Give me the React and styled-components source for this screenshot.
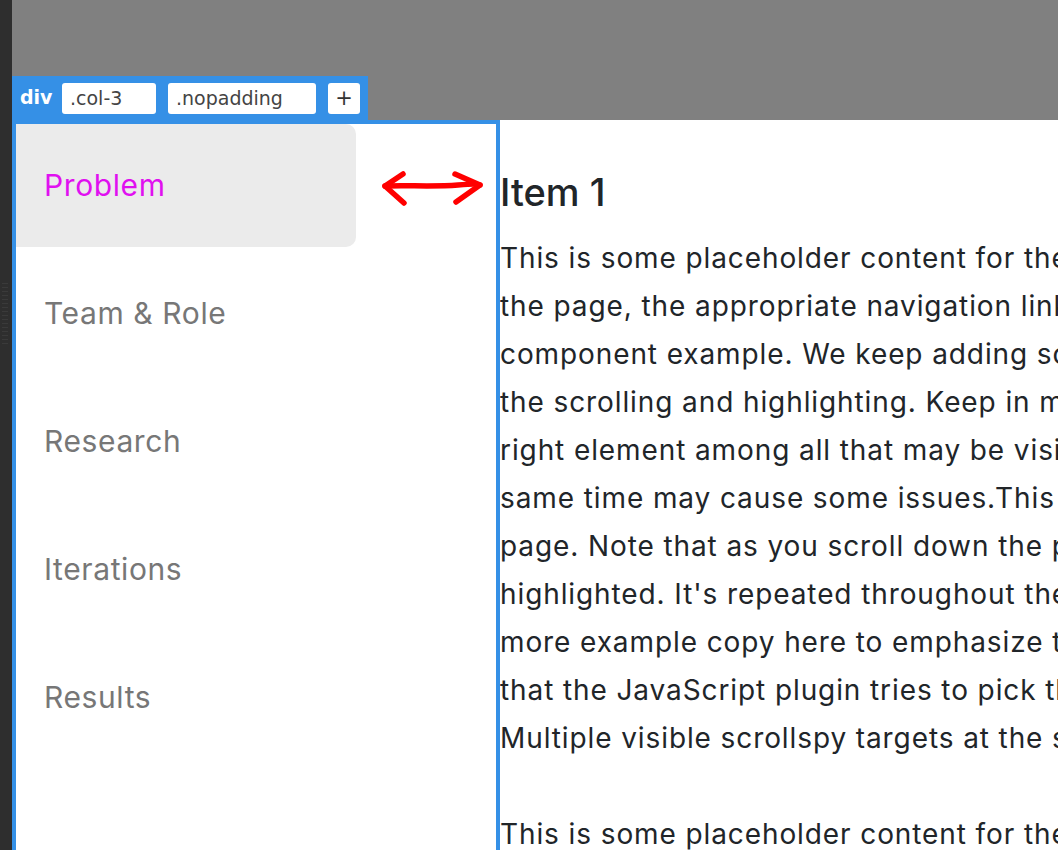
import styled, { createGlobalStyle } from "styled-components";

const GlobalStyle = createGlobalStyle`
    html, body {
        margin: 0;
        padding: 0;
        background: #ffffff;
    }
    body {
        font-family: 'Inter', 'Liberation Sans', sans-serif;
        overflow: hidden;
    }
`;

const navItems = ["Problem", "Team & Role", "Research", "Iterations", "Results"];

const firstPara = [
    "This is some placeholder content for the scrollspy page. Note that as you scroll down",
    "the page, the appropriate navigation link is highlighted. It's repeated throughout the",
    "component example. We keep adding some more example copy here to emphasize",
    "the scrolling and highlighting. Keep in mind that the JavaScript plugin tries to pick the",
    "right element among all that may be visible. Multiple visible scrollspy targets at the",
    "same time may cause some issues.This is some placeholder content for the scrollspy",
    "page. Note that as you scroll down the page, the appropriate navigation link is",
    "highlighted. It's repeated throughout the component example. We keep adding some",
    "more example copy here to emphasize the scrolling and highlighting. Keep in mind",
    "that the JavaScript plugin tries to pick the right element among all that may be visible.",
    "Multiple visible scrollspy targets at the same time may cause some issues.",
];

const secondPara = [
    "This is some placeholder content for the scrollspy page. Note that as you scroll down",
];

export default function App() {
    return (
        <>
            <GlobalStyle />
            <Page>
                <Strip>
                    <Grip />
                </Strip>
                <Main>
                    <TopArea>
                        <TagBar>
                            <TagName>div</TagName>
                            <Pill width={94}>.col-3</Pill>
                            <Pill width={148}>.nopadding</Pill>
                            <AddPill>+</AddPill>
                        </TagBar>
                    </TopArea>
                    <Body>
                        <Sidebar>
                            {navItems.map((item, i) => (
                                <NavLink key={item} active={i === 0}>{item}</NavLink>
                            ))}
                            {/* hand-drawn annotation arrow */}
                            <Arrow width="112" height="44" viewBox="0 0 112 44">
                                <path
                                    d="M7 19 C 28 18, 55 20, 80 18 S 98 18, 102 18"
                                    fill="none" stroke="#ff0000" strokeWidth="5.5" strokeLinecap="round"
                                />
                                <path
                                    d="M25 7 L 7 19 L 26 36"
                                    fill="none" stroke="#ff0000" strokeWidth="5.5" strokeLinecap="round" strokeLinejoin="round"
                                />
                                <path
                                    d="M77 7 L 102 18 L 78 35"
                                    fill="none" stroke="#ff0000" strokeWidth="5.5" strokeLinecap="round" strokeLinejoin="round"
                                />
                            </Arrow>
                        </Sidebar>
                        <Content>
                            <Heading>Item 1</Heading>
                            <Paragraph>
                                {firstPara.map((line, i) => <Line key={i}>{line}</Line>)}
                            </Paragraph>
                            <Paragraph>
                                {secondPara.map((line, i) => <Line key={i}>{line}</Line>)}
                            </Paragraph>
                        </Content>
                    </Body>
                </Main>
            </Page>
        </>
    );
}

const Page = styled.div`
    display: flex;
    width: 1058px;
    height: 850px;
    overflow: hidden;
`;

const Strip = styled.div`
    width: 12px;
    flex-shrink: 0;
    background: #2e2e2e;
    display: flex;
    flex-direction: column;
    padding-top: 283px;
    box-sizing: border-box;
`;

const Grip = styled.div`
    margin-left: 2px;
    width: 6px;
    height: 64px;
    background: repeating-linear-gradient(
        to bottom,
        #3a3a3a 0px,
        #3a3a3a 1px,
        transparent 1px,
        transparent 4px
    );
`;

const Main = styled.div`
    flex: 1;
    display: flex;
    flex-direction: column;
    min-width: 0;
`;

const TopArea = styled.div`
    height: 120px;
    background: #808080;
    display: flex;
    align-items: flex-end;
    flex-shrink: 0;
`;

const TagBar = styled.div`
    height: 44px;
    width: 356px;
    background: #3590e6;
    display: flex;
    align-items: center;
    gap: 12px;
    padding-left: 8px;
    box-sizing: border-box;
    font-family: 'DejaVu Sans', sans-serif;
`;

const TagName = styled.span`
    color: #ffffff;
    font-weight: bold;
    font-size: 19px;
    width: 30px;
    margin-top: -2px;
`;

const Pill = styled.div`
    width: ${(p) => p.width}px;
    height: 31px;
    background: #ffffff;
    border-radius: 3px;
    box-sizing: border-box;
    padding-left: 8px;
    display: flex;
    align-items: center;
    font-size: 19px;
    color: #444444;
`;

const AddPill = styled(Pill)`
    width: 32px;
    padding-left: 0;
    justify-content: center;
    font-size: 21px;
    color: #333333;
`;

const Body = styled.div`
    display: flex;
    flex: 1;
    min-height: 0;
`;

const Sidebar = styled.nav`
    position: relative;
    width: 488px;
    flex-shrink: 0;
    border: 4px solid #3590e6;
    border-bottom: none;
    box-sizing: border-box;
    display: flex;
    flex-direction: column;
    gap: 5px;
`;

const NavLink = styled.a`
    display: flex;
    align-items: center;
    width: 340px;
    height: 123px;
    box-sizing: border-box;
    padding-left: 28px;
    font-family: 'Inter', sans-serif;
    font-size: 30px;
    letter-spacing: 0.6px;
    color: ${(p) => (p.active ? "#e010f0" : "#777777")};
    background: ${(p) => (p.active ? "#ebebeb" : "transparent")};
    border-radius: 0 10px 10px 0;
    text-decoration: none;
    padding-bottom: 2px;
`;

const Arrow = styled.svg`
    position: absolute;
    left: 362px;
    top: 43px;
`;

const Content = styled.main`
    flex: 1;
    min-width: 0;
    overflow: hidden;
    padding-top: 50px;
    color: #212529;
    font-family: 'Inter', sans-serif;
`;

const Heading = styled.h5`
    margin: 0 0 18px 0;
    font-size: 38px;
    font-weight: 500;
    line-height: 1.2;
    white-space: nowrap;
`;

const Paragraph = styled.p`
    margin: 0 0 48px 0;
    font-size: 28px;
    letter-spacing: 0.9px;
    line-height: 48px;
`;

const Line = styled.span`
    display: block;
    white-space: nowrap;
`;
